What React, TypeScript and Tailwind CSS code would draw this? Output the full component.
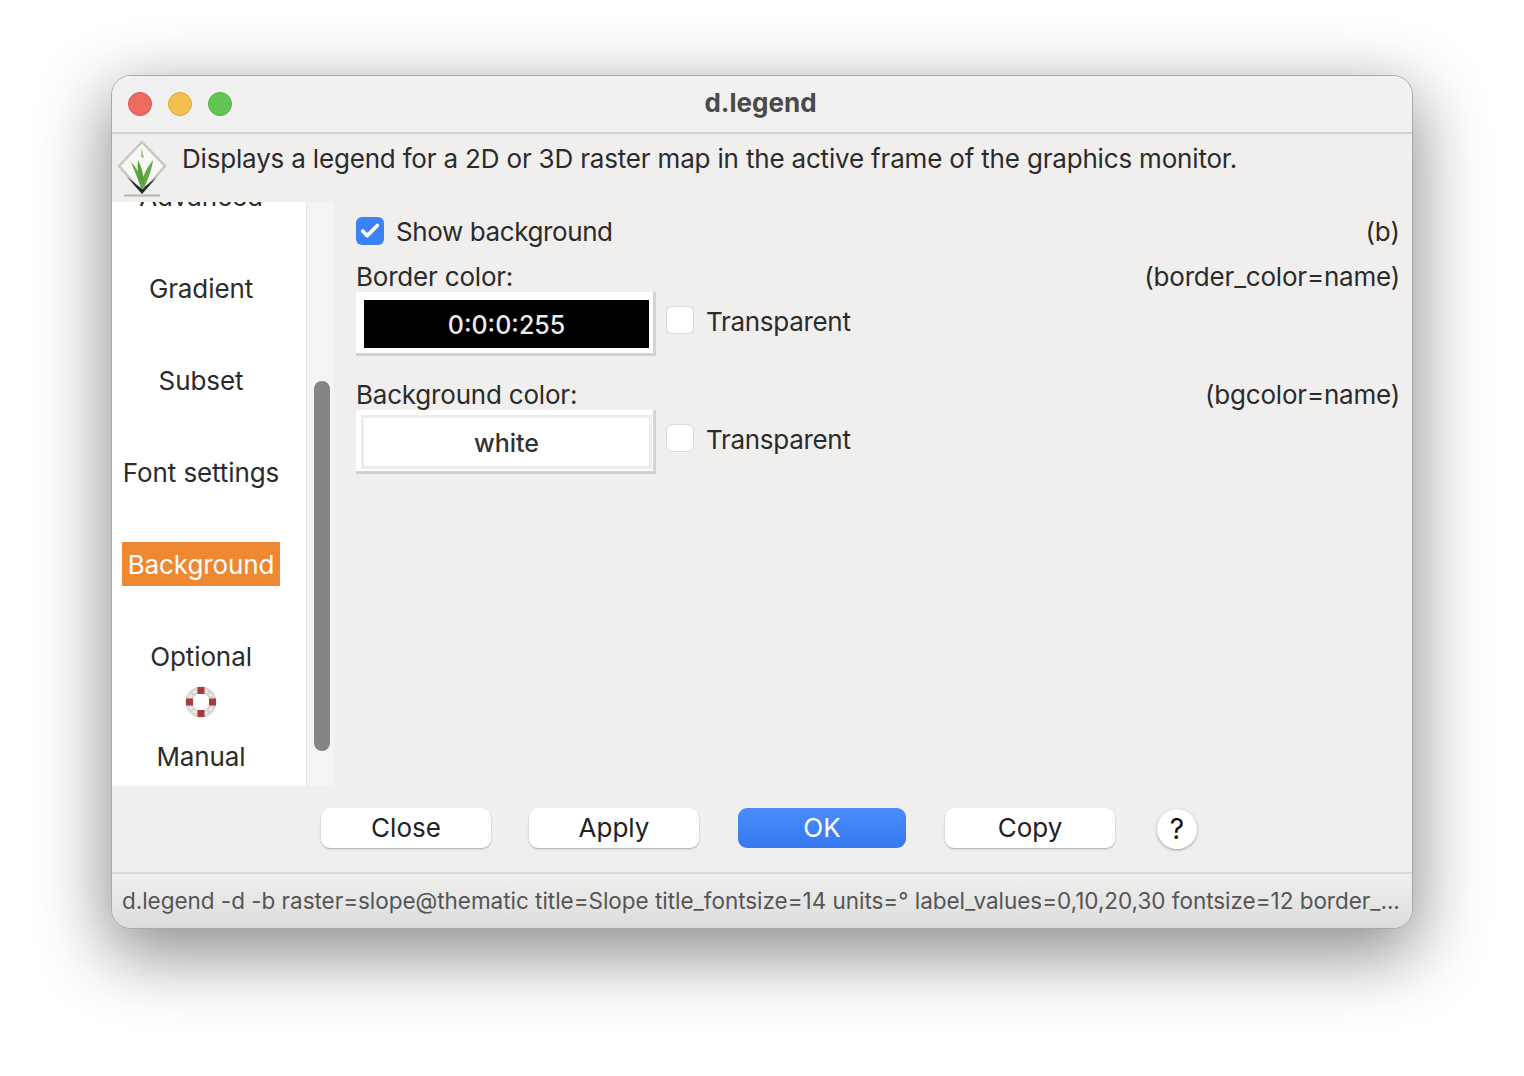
import { Check } from 'lucide-react';

const FONT = "font-['Inter','Liberation_Sans',sans-serif]";

function GrassLogo() {
  return (
    <svg width="50" height="58" viewBox="0 0 50 58" className="shrink-0">
      <path d="M25 2 L48 26 L25 52 L2 26 Z" fill="#f8f8f6" stroke="#c6c7c2" strokeWidth="2.5" />
      <path d="M10 37 L25 49 L40 37 L25 54 Z" fill="#262624" />
      <path d="M7 55.5 H43" stroke="#b4b4b1" strokeWidth="2" />
      <path d="M24 49 C22 40 17 31 14 22 C19 27 23 34 25 41 C27 33 31 26 36 20 C35 30 30 41 27 49 Z" fill="#63a94a" />
      <path d="M23 44 C21 36 20 28 21 20 C25 28 27 36 27 44 Z" fill="#57a03c" />
      <path d="M24 17 L24.5 8 L27 18 Z" fill="#8cc476" />
    </svg>
  );
}

function Lifebuoy() {
  return (
    <svg width="32" height="32" viewBox="0 0 32 32">
      <circle cx="16" cy="16" r="12" fill="none" stroke="#d9d6d6" strokeWidth="7" />
      <circle cx="16" cy="16" r="12" fill="none" stroke="#f4f2f2" strokeWidth="2" strokeDasharray="3 3" />
      <rect x="12.5" y="1" width="7" height="7" fill="#a8393d" />
      <rect x="12.5" y="24" width="7" height="7" fill="#a8393d" />
      <rect x="1" y="12.5" width="7" height="7" fill="#a8393d" />
      <rect x="24" y="12.5" width="7" height="7" fill="#a8393d" />
    </svg>
  );
}

function ColorButton({ label, dark }: { label: string; dark?: boolean }) {
  return (
    <div className="w-[300px] h-[64px] bg-white border-b-[3px] border-r-[3px] border-b-[#d0d0d0] border-r-[#d4d4d4] pt-[8px] pl-[8px] pr-[4px] pb-[5px] shrink-0">
      <div
        className={
          dark
            ? 'h-full bg-black text-[#ececec] flex items-center justify-center text-[25px] font-medium pt-[3px]'
            : 'h-full bg-white text-[#333] flex items-center justify-center text-[25px] font-medium pt-[3px] shadow-[0_0_0_3px_#ececec]'
        }
      >
        {label}
      </div>
    </div>
  );
}

function ColorRow({ title, param, value, dark }: { title: string; param: string; value: string; dark?: boolean }) {
  return (
    <div>
      <div className="flex justify-between h-[32px] items-center pb-[2px] text-[26px] text-[#2b2b2b] tracking-[-0.2px]">
        <span>{title}</span>
        <span>{param}</span>
      </div>
      <div className="flex -mt-[1px]">
        <ColorButton label={value} dark={dark} />
        <div className="ml-[10px] mt-[14px] w-[28px] h-[28px] bg-white rounded-[6px] border border-[#d9d9d9]" />
        <span className="ml-[12px] mt-[12px] text-[26px] leading-[36px] text-[#2b2b2b] tracking-[-0.3px]">Transparent</span>
      </div>
    </div>
  );
}

function Tab({ label, active }: { label: string; active?: boolean }) {
  return (
    <div className="h-[92px] flex items-center justify-center">
      {active ? (
        <div className="w-[158px] h-[44px] bg-[#ee8833] text-white flex items-center justify-center">{label}</div>
      ) : (
        label
      )}
    </div>
  );
}

function Btn({ label, primary }: { label: string; primary?: boolean }) {
  return (
    <div
      className={
        primary
          ? 'w-[168px] h-[40px] rounded-[9px] bg-gradient-to-b from-[#4a8dfa] to-[#3478f0] text-white flex items-center justify-center text-[26px] pb-[2px]'
          : 'w-[170px] h-[40px] rounded-[9px] bg-white text-[#222] flex items-center justify-center text-[26px] pb-[2px] shadow-[0_1px_2px_rgba(0,0,0,0.3)]'
      }
    >
      {label}
    </div>
  );
}

export default function App() {
  return (
    <div className={`${FONT} w-[1524px] h-[1076px] bg-white pt-[75px] px-[111px] overflow-hidden`}>
      <div className="w-[1302px] h-[854px] rounded-[20px] bg-[#f0efee] flex flex-col overflow-hidden border border-[#a9a9a9] shadow-[0_22px_70px_4px_rgba(0,0,0,0.45)]">
        {/* title bar */}
        <div className="h-[58px] shrink-0 bg-[#f2f1f1] border-b-2 border-[#d3d3d2] flex items-center relative">
          <div className="flex gap-[16px] ml-[16px]">
            <div className="w-[24px] h-[24px] rounded-full bg-[#ec6a5e] border border-[#d4554a]" />
            <div className="w-[24px] h-[24px] rounded-full bg-[#f4bf4f] border border-[#dca53a]" />
            <div className="w-[24px] h-[24px] rounded-full bg-[#61c554] border border-[#50ae44]" />
          </div>
          <div className="absolute inset-0 flex items-center justify-center text-[26px] font-bold text-[#4a4a4a] pb-[4px] pr-[3px]">d.legend</div>
        </div>

        {/* description */}
        <div className="h-[68px] shrink-0 flex items-start pl-[5px]">
          <div className="mt-[6px]">
            <GrassLogo />
          </div>
          <div className="ml-[15px] mt-[7px] text-[26px] leading-[36px] text-[#2b2b2b] tracking-[-0.18px] whitespace-nowrap">
            Displays a legend for a 2D or 3D raster map in the active frame of the graphics monitor.
          </div>
        </div>

        {/* notebook */}
        <div className="h-[584px] shrink-0 flex">
          <div className="w-[194px] bg-white overflow-hidden text-[26px] text-[#2b2b2b] tracking-[-0.1px] shrink-0">
            <div className="-mt-[52px] pl-[10px] pr-[26px]">
              <Tab label="Advanced" />
              <Tab label="Gradient" />
              <Tab label="Subset" />
              <Tab label="Font settings" />
              <Tab label="Background" active />
              <div className="h-[75px] flex items-start justify-center pt-[27px]">Optional</div>
              <div className="h-[32px] flex justify-center mt-[1px]">
                <Lifebuoy />
              </div>
              <div className="h-[68px] flex items-center justify-center pt-[8px]">Manual</div>
            </div>
          </div>
          <div className="w-[28px] shrink-0 bg-[#f4f4f4] border-l border-[#e6e6e6] pt-[179px] pl-[7px]">
            <div className="w-[16px] h-[370px] rounded-full bg-[#858585]" />
          </div>
          <div className="flex-1 pl-[22px] pr-[12px] pt-[13px]">
            <div className="flex items-center justify-between h-[32px] text-[26px] text-[#2b2b2b]">
              <div className="flex items-center">
                <div className="w-[28px] h-[28px] rounded-[6px] bg-[#3b82f6] flex items-center justify-center">
                  <Check size={22} strokeWidth={4} color="white" />
                </div>
                <span className="ml-[12px] tracking-[-0.4px]">Show background</span>
              </div>
              <span>(b)</span>
            </div>
            <div className="mt-[14px]">
              <ColorRow title="Border color:" param="(border_color=name)" value="0:0:0:255" dark />
            </div>
            <div className="mt-[23px]">
              <ColorRow title="Background color:" param="(bgcolor=name)" value="white" />
            </div>
          </div>
        </div>

        {/* buttons */}
        <div className="h-[88px] shrink-0 flex items-start pt-[22px] pl-[209px] border-b-2 border-[#d8d8d7]">
          <Btn label="Close" />
          <div className="ml-[38px]"><Btn label="Apply" /></div>
          <div className="ml-[39px]"><Btn label="OK" primary /></div>
          <div className="ml-[39px]"><Btn label="Copy" /></div>
          <div className="ml-[42px] mt-[1px] w-[40px] h-[40px] rounded-full bg-white text-[#111] flex items-center justify-center text-[28px] shadow-[0_1px_3px_rgba(0,0,0,0.35)]">?</div>
        </div>

        {/* status bar */}
        <div className="flex-1 bg-gradient-to-b from-[#f0f0ef] to-[#dcdcdc] pl-[10px] pr-[10px] pt-[10px] text-[22.5px] leading-[34px] text-[#555] tracking-[-0.03px] whitespace-nowrap overflow-hidden">
          d.legend -d -b raster=slope@thematic title=Slope title_fontsize=14 units=° label_values=0,10,20,30 fontsize=12 border_...
        </div>
      </div>
    </div>
  );
}
